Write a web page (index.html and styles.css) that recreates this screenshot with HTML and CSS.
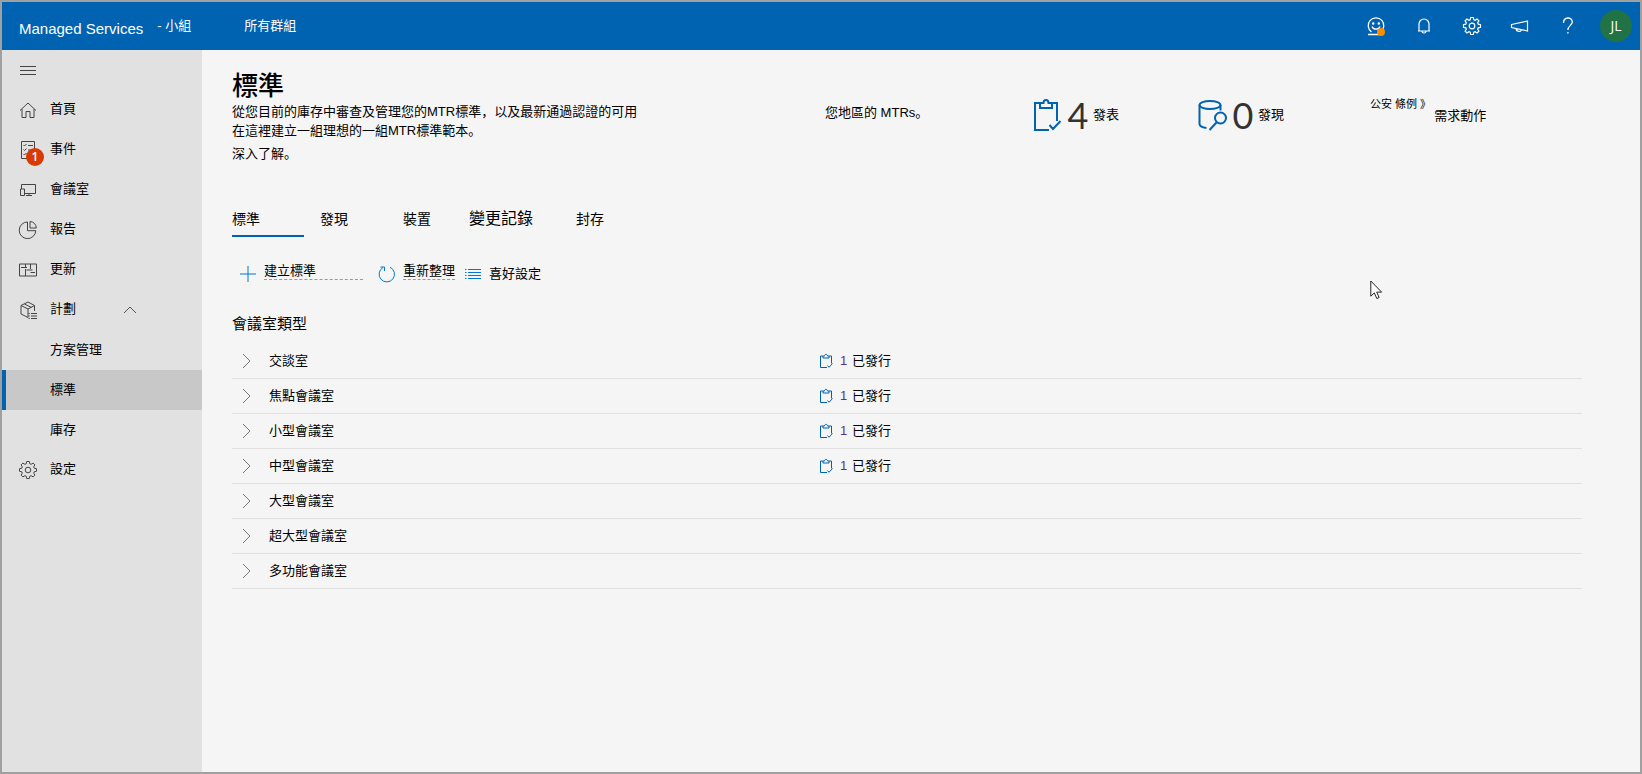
FILE: index.html
```html
<!DOCTYPE html>
<html lang="zh">
<head>
<meta charset="utf-8">
<meta name="viewport" content="width=device-width, initial-scale=1">
<title>Managed Services</title>
<link rel="stylesheet" href="styles.css">
</head>
<body>
<div class="app">
  <header class="topbar">
    <div class="brand">Managed Services</div>
    <div class="team">- 小組</div>
    <a class="groups" href="#groups">所有群組</a>
    <div class="actions">
      <button class="action" type="button" aria-label="Feedback">
        <svg width="20" height="20" viewBox="0 0 20 20" fill="none" stroke="currentColor" stroke-width="1.3"><path d="M5.500 16a7.800 7.800 0 1 1 9 0M2 18.500h11"/><path d="M6 10.500c1 3.500 7 3.500 8 0"/><circle cx="7.200" cy="7.500" r=".6" fill="currentColor"/><circle cx="12.800" cy="7.500" r=".6" fill="currentColor"/><circle cx="15" cy="16" r="4" fill="#ff8c00" stroke="none"/></svg>
      </button>
      <button class="action" type="button" aria-label="Notifications">
        <svg width="20" height="20" viewBox="0 0 20 20" fill="none" stroke="currentColor" stroke-width="1.200"><path d="M4 15h12M5 15V8a5 5 0 0 1 10 0v7M8 15.500c.3 2 3.700 2 4 0"/></svg>
      </button>
      <button class="action" type="button" aria-label="Settings">
        <svg width="20" height="20" viewBox="0 0 20 20" fill="none" stroke="currentColor" stroke-width="1.200"><use href="#gear"/></svg>
      </button>
      <button class="action" type="button" aria-label="Announcements">
        <svg width="20" height="20" viewBox="0 0 20 20" fill="none" stroke="currentColor" stroke-width="1.200"><path d="M1.500 8.500 17.500 5v10L1.500 11.500zM6 12.600c0 3.600 5.200 3.600 5.400 1.200"/></svg>
      </button>
      <button class="action" type="button" aria-label="Help">
        <svg width="20" height="20" viewBox="0 0 20 20" fill="none" stroke="currentColor" stroke-width="1.300"><path d="M5.500 7c0-6.500 8.800-6.500 8.800-1 0 3.200-4.400 3.700-4.400 8M9.900 16v1.500"/></svg>
      </button>
      <button class="action" type="button" aria-label="Account"><span class="avatar">JL</span></button>
    </div>
  </header>

  <div class="body">
    <nav class="sidebar">
      <button class="nav-item" type="button" aria-label="Menu">
        <svg class="nav-icon" viewBox="0 0 20 20"><path d="M2 6.500h16M2 10.500h16M2 14.500h16"/></svg>
      </button>
      <a class="nav-item" href="#home">
        <svg class="nav-icon" viewBox="0 0 20 20"><path d="M2 10.500 10 3l8 7.500M4 9v8.500h4v-6h4v6h4V9"/></svg>
        <span>首頁</span>
      </a>
      <a class="nav-item" href="#incidents">
        <svg class="nav-icon" viewBox="0 0 20 20"><path d="M3.500 1.500h13v17h-13zM5.500 5l1 1 2-2M10 5.500h5M5.500 9.500l1 1 2-2M10 10h5M5.500 14l1 1 2-2"/></svg>
        <span>事件</span>
        <span class="badge">1</span>
      </a>
      <a class="nav-item" href="#rooms">
        <svg class="nav-icon" viewBox="0 0 20 20"><path d="M3.500 9V4.500h14v9H7M2.500 9h4v6.500h-4zM11 13.500V16M8 15.500h6"/></svg>
        <span>會議室</span>
      </a>
      <a class="nav-item" href="#reports">
        <svg class="nav-icon" viewBox="0 0 20 20"><path d="M9.500 2a8.300 8.300 0 1 0 8.300 8.700H9.500zM12 1.500v6.500h6.300A6.500 6.500 0 0 0 12 1.500z"/></svg>
        <span>報告</span>
      </a>
      <a class="nav-item" href="#updates">
        <svg class="nav-icon" viewBox="0 0 20 20"><path d="M1.500 4h17v12h-17zM7.500 4v3M3 7.500h6M12.500 4v5M8.500 10h6M12.500 12.500H17M7.500 9v7"/></svg>
        <span>更新</span>
      </a>
      <button class="nav-item" type="button" aria-expanded="true">
        <svg class="nav-icon" viewBox="0 0 20 20"><path d="M10 17.500 3 14V5.500L10 2l6.500 3.500V11M3 5.500 10 9l6.500-3.500M10 9v8.500M6.500 4l7 3.500M10.500 13.500h1.300M13 13.500h6M10.500 16h1.300M13 16h6M10.500 18.500h1.300M13 18.500h6"/></svg>
        <span>計劃</span>
        <svg class="caret" width="14" height="8" viewBox="0 0 14 8"><path d="M1 7l6-6 6 6"/></svg>
      </button>
      <a class="nav-item sub" href="#plan">方案管理</a>
      <a class="nav-item sub current" href="#standards" aria-current="page">標準</a>
      <a class="nav-item sub" href="#inventory">庫存</a>
      <a class="nav-item" href="#settings">
        <svg class="nav-icon" viewBox="0 0 20 20"><g id="gear"><path d="M8.700 1.500h2.600l.5 2.300 1.300.5 2-1.200 1.800 1.800-1.200 2 .5 1.300 2.300.5v2.600l-2.300.5-.5 1.300 1.200 2-1.800 1.800-2-1.200-1.300.5-.5 2.300H8.700l-.5-2.300-1.300-.5-2 1.200-1.800-1.800 1.200-2-.5-1.300-2.300-.5V8.700l2.300-.5.5-1.300-1.200-2 1.800-1.800 2 1.200 1.300-.5z"/><circle cx="10" cy="10" r="2.800"/></g></svg>
        <span>設定</span>
      </a>
    </nav>

    <main class="main">
      <section class="summary">
        <div class="intro">
          <h1 class="title">標準</h1>
          <p class="text">從您目前的庫存中審查及管理您的MTR標準，以及最新通過認證的可用<br>在這裡建立一組理想的一組MTR標準範本。</p>
          <a class="learn" href="#learn">深入了解。</a>
        </div>
        <p class="region">您地區的 MTRs。</p>
        <div class="stat">
          <svg class="stat-icon" width="30" height="34" viewBox="0 0 30 34"><path d="M16 32H2V5h6M17 5h7v18M7 5v5h12V5h-3.500C15.500 1 10.500 1 10.500 5zM16.500 27l3.500 4 7.500-8"/></svg>
          <span class="number">4</span><span>發表</span>
        </div>
        <div class="stat">
          <svg class="stat-icon" width="30" height="34" viewBox="0 0 30 34"><ellipse cx="12" cy="7" rx="10.500" ry="4"/><path d="M1.500 7v19c0 2 3 3.500 7 4M22.500 7v5.500M18.500 24.500 11.500 32"/><circle cx="22.500" cy="20" r="5.500"/></svg>
          <span class="number">0</span><span>發現</span>
        </div>
        <div class="pending"><span class="note">公安 條例 》</span><span class="need">需求動作</span></div>
      </section>

      <div class="tabs" role="tablist">
        <button class="tab selected" type="button" role="tab" aria-selected="true">標準</button>
        <button class="tab" type="button" role="tab">發現</button>
        <button class="tab narrow" type="button" role="tab">裝置</button>
        <button class="tab wide" type="button" role="tab">變更記錄</button>
        <button class="tab" type="button" role="tab">封存</button>
      </div>

      <div class="toolbar">
        <button class="tool create" type="button">
          <svg width="18" height="18" viewBox="0 0 18 18"><path d="M9 1v16M1 9h16"/></svg><span class="dashed">建立標準</span>
        </button>
        <button class="tool refresh" type="button">
          <svg width="18" height="18" viewBox="0 0 18 18"><path d="M5 2.500a7.700 7.700 0 1 0 7-.3M2.500 2h4v4"/></svg><span class="dashed">重新整理</span>
        </button>
        <button class="tool" type="button">
          <svg width="18" height="18" viewBox="0 0 18 18"><path d="M1 4.500h1.500M4 4.500h13M1 7.500h1.500M4 7.500h13M1 10.500h1.500M4 10.500h13M1 13.500h1.500M4 13.500h13"/></svg><span>喜好設定</span>
        </button>
      </div>

      <h2 class="heading">會議室類型</h2>
      <ul class="rooms">
        <li class="row"><button class="room" type="button"><svg class="chevron" viewBox="0 0 10 16"><path d="M1 1l7 7-7 7"/></svg>交談室</button><a class="published" href="#r1"><svg class="clip" viewBox="0 0 14 16"><use href="#clip"/></svg><span class="count">1</span>已發行</a></li>
        <li class="row"><button class="room" type="button"><svg class="chevron" viewBox="0 0 10 16"><path d="M1 1l7 7-7 7"/></svg>焦點會議室</button><a class="published" href="#r2"><svg class="clip" viewBox="0 0 14 16"><use href="#clip"/></svg><span class="count">1</span>已發行</a></li>
        <li class="row"><button class="room" type="button"><svg class="chevron" viewBox="0 0 10 16"><path d="M1 1l7 7-7 7"/></svg>小型會議室</button><a class="published" href="#r3"><svg class="clip" viewBox="0 0 14 16"><use href="#clip"/></svg><span class="count">1</span>已發行</a></li>
        <li class="row"><button class="room" type="button"><svg class="chevron" viewBox="0 0 10 16"><path d="M1 1l7 7-7 7"/></svg>中型會議室</button><a class="published" href="#r4"><svg class="clip" viewBox="0 0 14 16"><g id="clip"><path d="M8 14.500H1.500V3H4M10 3h2.500v7.500M4 3v2h6V3H8.500C8.500.8 5.500.8 5.500 3zM8.500 12.500l1.500 1.800 3.500-3.800"/></g></svg><span class="count">1</span>已發行</a></li>
        <li class="row"><button class="room" type="button"><svg class="chevron" viewBox="0 0 10 16"><path d="M1 1l7 7-7 7"/></svg>大型會議室</button></li>
        <li class="row"><button class="room" type="button"><svg class="chevron" viewBox="0 0 10 16"><path d="M1 1l7 7-7 7"/></svg>超大型會議室</button></li>
        <li class="row"><button class="room" type="button"><svg class="chevron" viewBox="0 0 10 16"><path d="M1 1l7 7-7 7"/></svg>多功能會議室</button></li>
      </ul>
    </main>
  </div>
  <svg class="pointer" width="14" height="20" viewBox="0 0 14 20"><path d="M.8 1v15.200l3.500-3.300 2.500 5.600 2.300-1-2.400-5.400h4.900z"/></svg>
</div>
</body>
</html>
```
FILE: styles.css
```css
* { box-sizing: border-box; }
body {
  margin: 0;
  font: 13px/18px "Liberation Sans", "Noto Sans CJK SC", sans-serif;
  color: #000;
}
button {
  margin: 0;
  padding: 0;
  border: 0;
  background: none;
  font: inherit;
  color: inherit;
  text-align: left;
}
a { color: inherit; text-decoration: none; }
svg { flex: none; fill: none; }

.app {
  position: relative;
  display: flex;
  flex-direction: column;
  min-height: 100vh;
  border: 2px solid #a0a0a0;
  background: #f5f5f5;
}

.topbar {
  display: flex;
  align-items: center;
  height: 48px;
  padding-left: 17px;
  background: #0063b1;
  color: #fff;
}
.brand { padding-top: 6px; font-size: 15px; }
.team { margin-left: 14px; }
.groups { margin-left: 53px; }
.actions { display: flex; margin-left: auto; }
.action {
  display: flex;
  align-items: center;
  justify-content: center;
  width: 48px;
  height: 48px;
}
.avatar {
  width: 32px;
  border-radius: 50%;
  background: #217346;
  font: 14px/32px "Open Sans", sans-serif;
  text-align: center;
}

.body { display: flex; flex: 1; }
.sidebar { flex: none; width: 200px; background: #e1e1e1; }
.nav-item {
  position: relative;
  display: flex;
  align-items: center;
  gap: 12px;
  width: 100%;
  height: 40px;
  padding-left: 16px;
}
.nav-item span { padding-bottom: 2px; }
.nav-icon { width: 20px; height: 20px; stroke: #444; stroke-width: 1; }
.caret { margin-left: 35px; stroke: #555; }
.sub { padding-left: 48px; }
.current { border-left: 4px solid #0063b1; padding-left: 44px; background: #c8c8c8; }
.nav-item .badge {
  position: absolute;
  left: 24px;
  top: 18px;
  width: 18px;
  padding: 0;
  border-radius: 50%;
  background: #d83b01;
  color: #fff;
  font: 600 12px/18px "Open Sans", sans-serif;
  text-align: center;
}

.main { flex: 1; min-width: 0; padding: 20px 58px 40px 30px; }
.summary {
  display: grid;
  grid-template-columns: 593fr 208fr 165fr 172fr 212fr;
  align-items: start;
}
.title { margin: 0; font-size: 26px; font-weight: 500; line-height: 32px; }
.text { margin: 0; line-height: 19px; white-space: nowrap; }
.learn { display: inline-block; padding-top: 5px; }
.region { margin: 34px 0 0; }
.stat { display: flex; align-items: center; height: 40px; margin-top: 25px; }
.stat-icon { stroke: #0063b1; stroke-width: 2; }
.number {
  width: 30px;
  color: #333;
  font: 400 36px/40px Lato, sans-serif;
  text-align: center;
}
.pending { display: flex; margin-top: 25px; white-space: nowrap; }
.note { font-size: 11px; }
.need { padding: 12px 0 0 3px; }

.tabs { display: flex; gap: 16px; margin-top: 38px; font-size: 14px; }
.tab { width: 67px; height: 36px; padding-top: 2px; border-bottom: 2px solid transparent; }
.tab.selected { width: 72px; border-color: #0063b1; }
.tab.narrow { width: 50px; }
.tab.wide { width: 91px; font-size: 16px; }

.toolbar { display: flex; align-items: center; height: 36px; margin-top: 19px; padding-left: 7px; }
.tool { display: flex; align-items: center; gap: 7px; }
.tool svg { stroke: #0078d4; }
.create { width: 139px; }
.refresh { width: 86px; }
.dashed { margin-bottom: 5px; border-bottom: 1px dashed #999; line-height: 16px; }
.create .dashed { width: 99px; }

.heading { margin: 21px 0 9px; font-size: 15px; font-weight: 400; line-height: 22px; }
.rooms { margin: 0; padding: 0; list-style: none; }
.row {
  display: grid;
  grid-template-columns: 587fr 763fr;
  align-items: center;
  height: 35px;
  border-bottom: 1px solid #e1e1e1;
}
.room { display: flex; align-items: center; gap: 17px; padding-left: 10px; }
.chevron { width: 10px; height: 16px; stroke: #777; }
.published { display: flex; align-items: center; }
.clip { width: 14px; height: 16px; stroke: #0063b1; }
.count { width: 19px; padding-left: 7px; color: #5c2e91; }

.pointer { position: absolute; left: 1368px; top: 278px; fill: #fff; stroke: #222; }
```
